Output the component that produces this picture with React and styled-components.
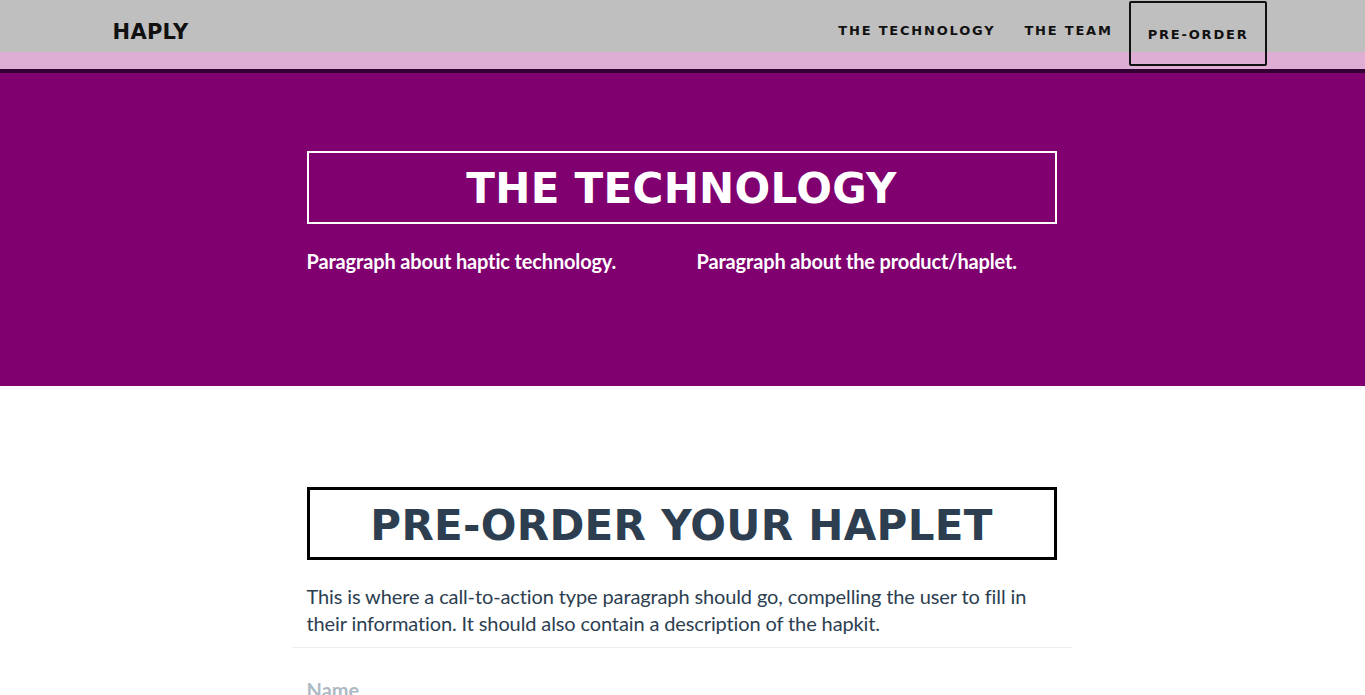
import React from 'react';
import styled, { createGlobalStyle } from 'styled-components';

const GlobalStyle = createGlobalStyle`
  html, body {
    margin: 0;
    padding: 0;
    background: #fff;
    font-family: Lato, "Liberation Sans", sans-serif;
  }
  * {
    box-sizing: border-box;
  }
`;

const headingFont = `"DejaVu Sans", "Noto Sans", sans-serif`;

const Nav = styled.nav`
  height: 73px;
  background: linear-gradient(#bfbfbf 0, #bfbfbf 52px, #dfaed4 52px, #dfaed4 69px);
  border-bottom: 4px solid #330033;
`;

const NavInner = styled.div`
  width: 1170px;
  margin: 0 auto;
  padding: 0 0 0 15px;
  display: flex;
  align-items: flex-start;
  justify-content: space-between;
`;

const Brand = styled.a`
  font-family: ${headingFont};
  font-weight: bold;
  font-size: 21px;
  letter-spacing: 0.3px;
  color: #111;
  text-decoration: none;
  line-height: 22px;
  margin-top: 21px;
`;

const Links = styled.ul`
  list-style: none;
  margin: 0 1px 0 0;
  padding: 0;
  display: flex;
  align-items: flex-start;
`;

const LinkItem = styled.li`
  display: flex;
`;

const NavLink = styled.a`
  font-family: ${headingFont};
  font-weight: bold;
  font-size: 13px;
  letter-spacing: 1.8px;
  color: #111;
  text-decoration: none;
  padding: 0 14px 0 15px;
  line-height: 62px;
  ${p => p.$boxed && `
    margin: 1px 0 0 2px;
    height: 65px;
    line-height: 64px;
    padding: 0 16px 0 17px;
    border: 2px solid #111;
    border-radius: 2px;
    position: relative;
    z-index: 1;
  `}
`;

const Section = styled.section`
  background: ${p => p.$bg};
  padding: ${p => p.$pad};
  height: ${p => p.$height || 'auto'};
`;

const Container = styled.div`
  width: 780px;
  margin: 0 auto;
  padding: 0 15px;
  transform: translateX(-1px);
`;

const TitleBox = styled.h2`
  margin: 0;
  height: 73px;
  border: ${p => p.$border};
  color: ${p => p.$color};
  font-family: ${headingFont};
  font-weight: bold;
  font-size: 42px;
  letter-spacing: 0.3px;
  line-height: 72px;
  text-align: center;
`;

const Row = styled.div`
  display: grid;
  grid-template-columns: 1fr 1fr;
  margin: 0 -15px;
  padding-top: 23px;
`;

const Col = styled.div`
  padding: 0 15px;
`;

const HeroText = styled.p`
  margin: 0;
  color: #fff;
  font-size: 20px;
  font-weight: 700;
  line-height: 28px;
  letter-spacing: -0.15px;
`;

const Lead = styled.p`
  margin: 23px 0 0;
  color: #2c3e50;
  font-size: 20px;
  line-height: 27px;
  letter-spacing: -0.12px;
`;

const Divider = styled.hr`
  margin: 10px -15px 0;
  border: 0;
  border-top: 1px solid #eee;
`;

const Field = styled.div`
  padding-top: 30px;
`;

const Label = styled.label`
  display: block;
  color: #aebac3;
  font-size: 20px;
  font-weight: 700;
`;

const Input = styled.input`
  margin-top: 8px;
  width: 100%;
  height: 40px;
  border: 0;
  border-bottom: 1px solid #eee;
  font-family: Lato, sans-serif;
  font-size: 19px;
`;

export default function App() {
  return (
    <>
      <GlobalStyle />
      <Nav>
        <NavInner>
          <Brand href="#">HAPLY</Brand>
          <Links>
            <LinkItem><NavLink href="#tech">THE TECHNOLOGY</NavLink></LinkItem>
            <LinkItem><NavLink href="#team">THE TEAM</NavLink></LinkItem>
            <LinkItem><NavLink href="#order" $boxed>PRE-ORDER</NavLink></LinkItem>
          </Links>
        </NavInner>
      </Nav>
      <Section id="tech" $bg="#800070" $pad="78px 0 0" $height="313px">
        <Container>
          <TitleBox $border="2px solid #fff" $color="#fff">THE TECHNOLOGY</TitleBox>
          <Row>
            <Col><HeroText>Paragraph about haptic technology.</HeroText></Col>
            <Col><HeroText>Paragraph about the product/haplet.</HeroText></Col>
          </Row>
        </Container>
      </Section>
      <Section id="order" $bg="#fff" $pad="101px 0 0">
        <Container>
          <TitleBox $border="3px solid #000" $color="#2c3e50">PRE-ORDER YOUR HAPLET</TitleBox>
          <Lead>
            This is where a call-to-action type paragraph should go, compelling the user to fill in
            their information. It should also contain a description of the hapkit.
          </Lead>
          <Divider />
          <Field>
            <Label htmlFor="name">Name</Label>
            <Input id="name" />
          </Field>
        </Container>
      </Section>
    </>
  );
}
